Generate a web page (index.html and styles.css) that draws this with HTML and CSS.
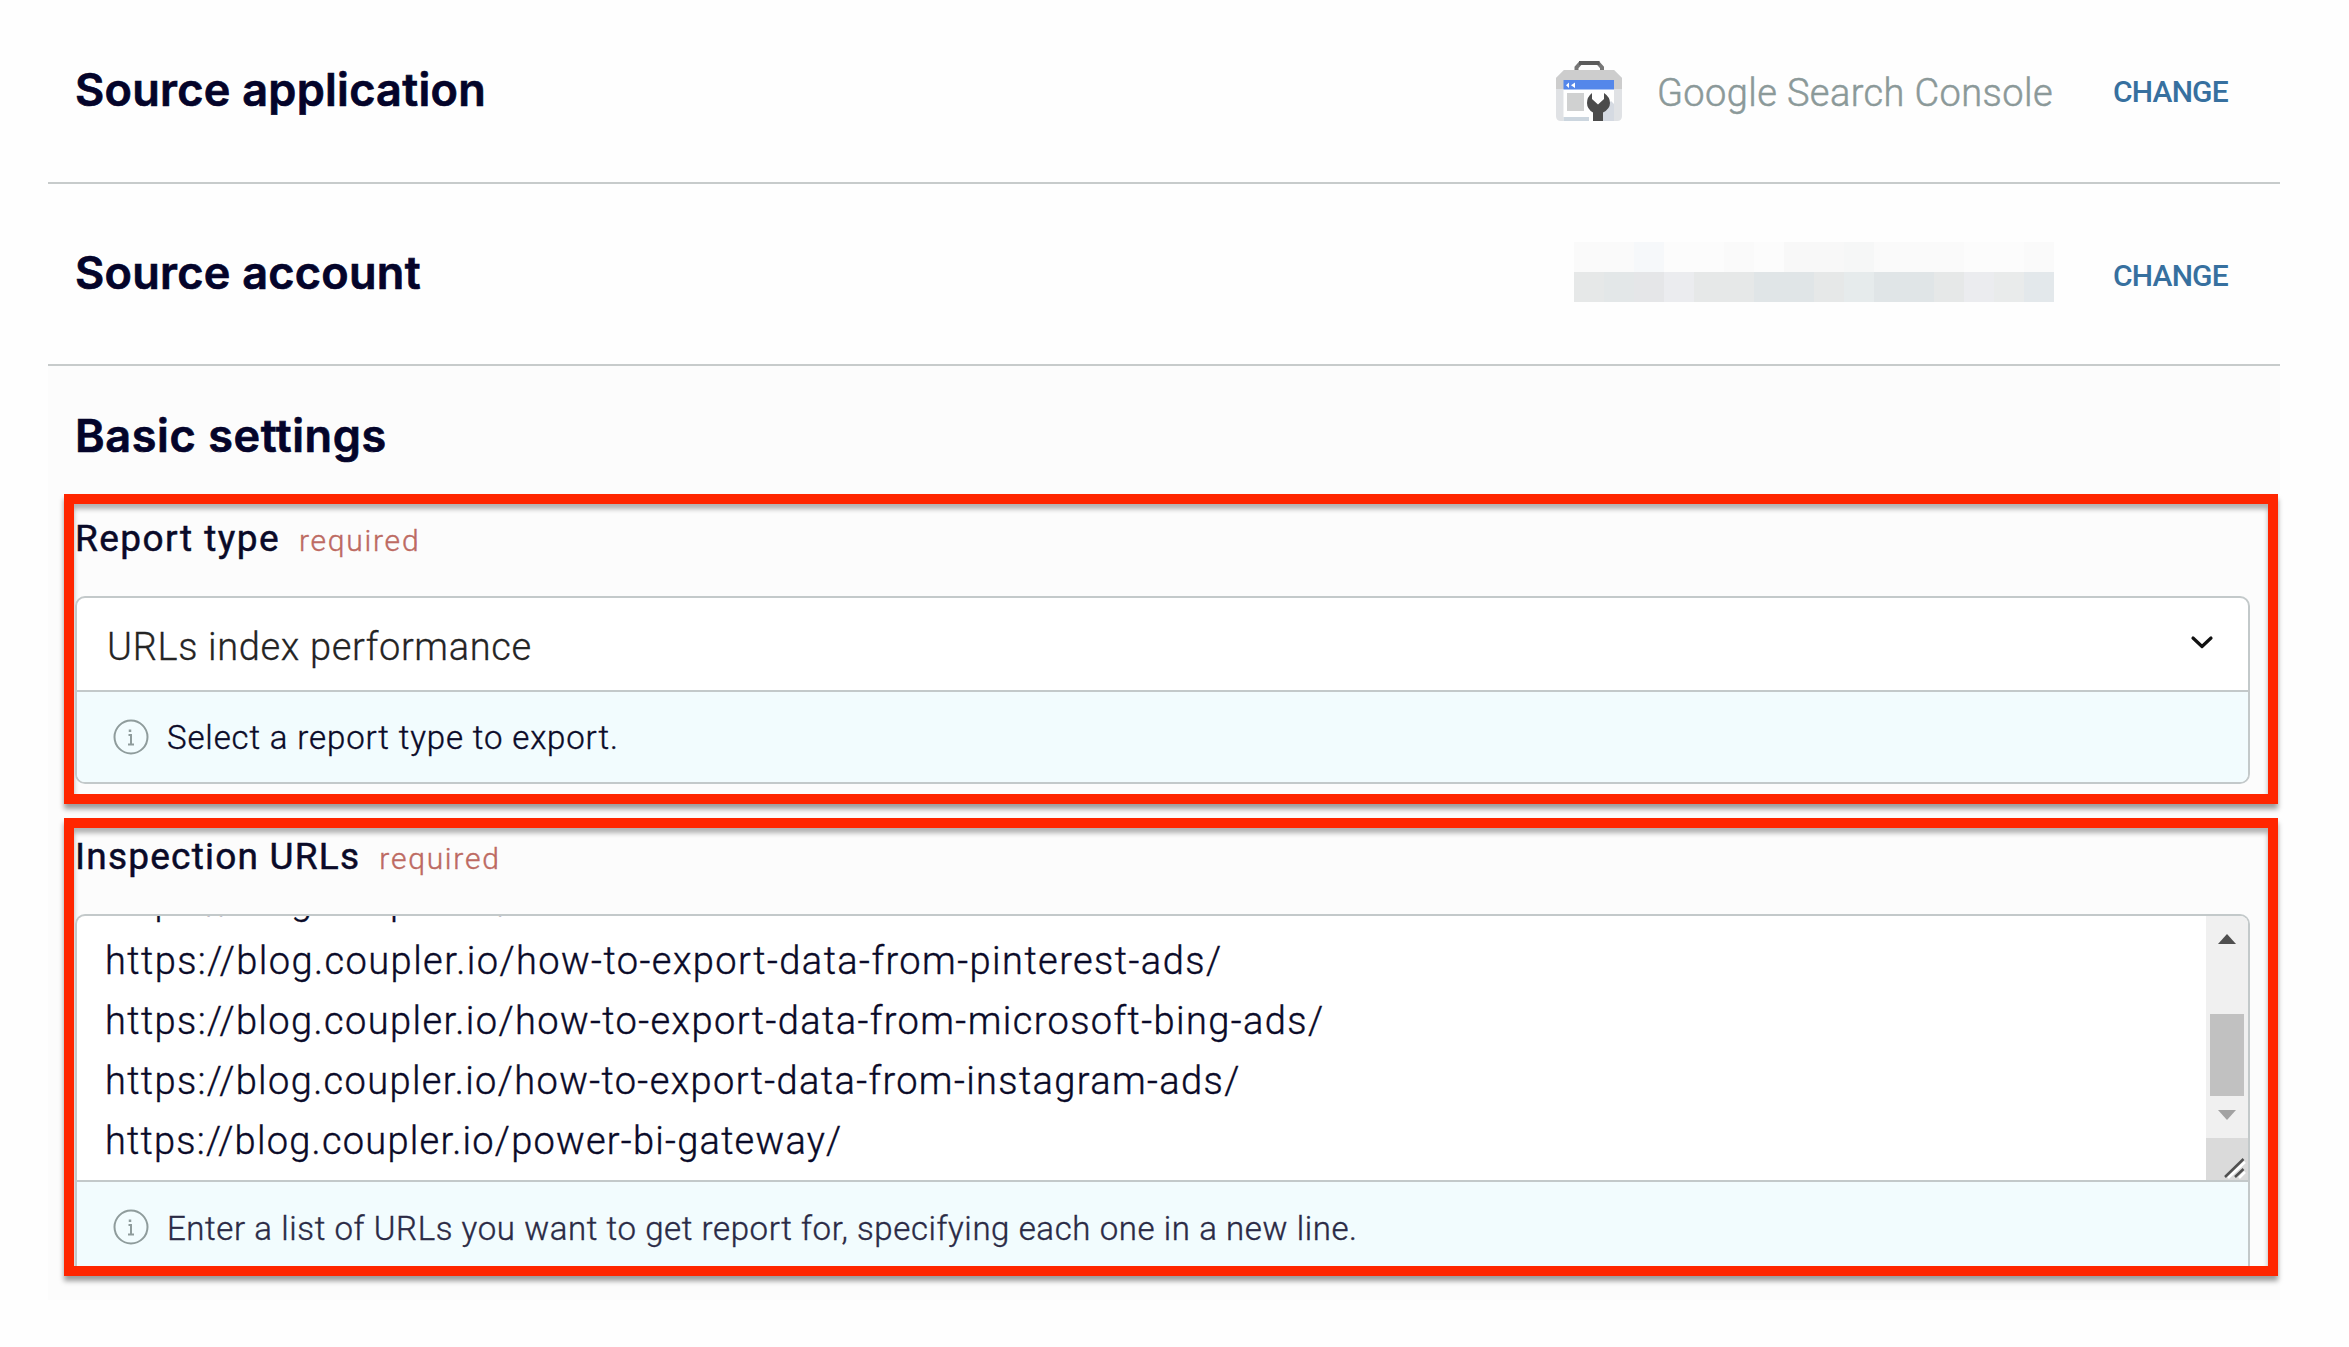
FILE: index.html
```html
<!DOCTYPE html>
<html lang="en">
<head>
<meta charset="utf-8">
<title>Source settings</title>
<link rel="stylesheet" href="styles.css">
</head>
<body>
<main class="page">
  <section class="row">
    <h2 class="heading">Source application</h2>
    <div class="source">
      <svg class="source-icon" width="66" height="60" viewBox="0 0 66 60">
        <path d="M20.500 11V6.500L24.500 2H42L46 6.500V11" fill="none" stroke="#777" stroke-width="4"/>
        <path d="M23 2H43.500" stroke="#5c5c5c" stroke-width="4"/>
        <path d="M8 9H58L66 17V55Q66 60 61 60H5Q0 60 0 55V17Z" fill="#e0e2e5"/>
        <path d="M8 9H58L66 17V28H0V17Z" fill="#cdcdcd"/>
        <path d="M7.500 28H58V60H7.500Z" fill="#fff"/>
        <path d="M7.500 19H58V28.500H7.500Z" fill="#5487ea"/>
        <path d="M10 24.200L13 21.500V27ZM15 24.200L19 21.500V27Z" fill="#fff"/>
        <path d="M11 32H28V50H11Z" fill="#d0d1d1"/>
        <path d="M7.500 56H33V60H7.500Z" fill="#ccd6df"/>
        <path d="M45 60V51L55 40L58 43V60Z" fill="#d5dae2"/>
        <path d="M36 32V38L42 43.500L48 38V32Q54 36 54 42Q54 48 47 51.500V60H37V51.500Q31 48 31 42Q31 36 36 32Z" fill="#4b4b4b"/>
      </svg>
      <span class="source-name">Google Search Console</span>
    </div>
    <a class="change">CHANGE</a>
  </section>

  <section class="row row-account">
    <h2 class="heading">Source account</h2>
    <div class="redacted">
      <i class="r1"></i><i class="r1"></i><i class="r2"></i><i class="r3"></i><i class="r3"></i><i class="r1"></i><i class="r3"></i><i class="r4"></i><i class="r4"></i><i class="r5"></i><i class="r1"></i><i class="r1"></i><i class="r1"></i><i class="r3"></i><i class="r3"></i><i class="r1"></i>
      <i class="d1"></i><i class="d2"></i><i class="d3"></i><i class="d4"></i><i class="d1"></i><i class="d1"></i><i class="d5"></i><i class="d5"></i><i class="d1"></i><i class="d6"></i><i class="d5"></i><i class="d5"></i><i class="d1"></i><i class="d4"></i><i class="d7"></i><i class="d8"></i>
    </div>
    <a class="change">CHANGE</a>
  </section>

  <section class="settings">
    <h2 class="heading heading-basic">Basic settings</h2>

    <div class="frame frame-report">
      <div class="label"><span class="label-report">Report type</span><span class="required">required</span></div>
      <div class="field">
        <div class="select">
          <span>URLs index performance</span>
          <svg width="24" height="16" viewBox="0 0 24 16"><path d="M3 3L12 11.500L21 3" fill="none" stroke="#111" stroke-width="3.200" stroke-linecap="round" stroke-linejoin="round"/></svg>
        </div>
        <div class="help">
          <svg width="36" height="36" viewBox="0 0 36 36" fill="none" stroke="#8f9c9c" stroke-width="2"><circle cx="18" cy="18" r="16.500"/><path d="M15.500 16H18V25M15 25.500H21"/><path d="M17 10.500V13" stroke-width="2.500"/></svg>
          <span class="help-report">Select a report type to export.</span>
        </div>
      </div>
    </div>

    <div class="frame frame-urls">
      <div class="label"><span class="label-urls">Inspection URLs</span><span class="required">required</span></div>
      <div class="field field-open">
        <div class="textarea">
          <div class="lines">
            <span>https://blog.coupler.io/</span>
            <span class="line-pinterest">https://blog.coupler.io/how-to-export-data-from-pinterest-ads/</span>
            <span>https://blog.coupler.io/how-to-export-data-from-microsoft-bing-ads/</span>
            <span class="line-instagram">https://blog.coupler.io/how-to-export-data-from-instagram-ads/</span>
            <span class="line-last">https://blog.coupler.io/power-bi-gateway/</span>
          </div>
          <div class="scroll">
            <svg class="arrow-up" width="18" height="10" viewBox="0 0 18 10"><path d="M0 10L9 0L18 10Z" fill="#4f4f4f"/></svg>
            <div class="thumb"></div>
            <svg class="arrow-down" width="18" height="10" viewBox="0 0 18 10"><path d="M0 0L9 10L18 0Z" fill="#a2a2a2"/></svg>
            <svg class="corner" width="42" height="42" viewBox="0 0 42 42"><path d="M0 0H42V42H0Z" fill="#dadada"/><path d="M22 40L39 24M33 40L39 34" stroke="#fff" stroke-width="2.500"/><path d="M19 39L37.500 21M29 39L37.500 31" stroke="#505050" stroke-width="2.500"/></svg>
          </div>
        </div>
        <div class="help help-cut">
          <svg width="36" height="36" viewBox="0 0 36 36" fill="none" stroke="#8f9c9c" stroke-width="2"><circle cx="18" cy="18" r="16.500"/><path d="M15.500 16H18V25M15 25.500H21"/><path d="M17 10.500V13" stroke-width="2.500"/></svg>
          <span class="help-urls">Enter a list of URLs you want to get report for, specifying each one in a new line.</span>
        </div>
      </div>
    </div>
  </section>
</main>
</body>
</html>
```
FILE: styles.css
```css
* { box-sizing: border-box; }
body { margin: 0; background: #fefefe; font-family: Roboto, "Liberation Sans", sans-serif; font-weight: 300; color: #0a0a28; }
.page { padding: 0 69px 0 48px; }

.row { display: grid; grid-template-columns: 1fr auto 116px; column-gap: 59px; align-items: center; height: 184px; padding: 0 51px 0 27px; border-bottom: 2px solid #c7cbcb; }
.row-account { height: 182px; }
.heading { margin: 0; padding-bottom: 2px; font: 600 45px/60px Inter, "Liberation Sans", sans-serif; letter-spacing: .28px; color: #04042a; -webkit-text-stroke: .7px #04042a; }
.source { display: flex; align-items: center; gap: 34px; padding-right: 1px; }
.source-icon { margin: 0 1px 1px 0; }
.source-name { padding-top: 3px; font-size: 38px; letter-spacing: .41px; color: #8b9999; -webkit-text-stroke: .5px #8b9999; white-space: nowrap; }
.change { padding-top: 1px; font-size: 30px; font-weight: 500; letter-spacing: -.8px; color: #37709f; }
.row-account .change { padding-top: 2px; }

.redacted { display: grid; grid-template-columns: repeat(16, 30px); grid-auto-rows: 30px; margin-bottom: 4px; }
.r1 { background: #fafafa; }
.r2 { background: #f6f8fa; }
.r3 { background: #fcfcfc; }
.r4 { background: #f8f8f8; }
.r5 { background: #f6f7f7; }
.d1 { background: #e6e8e8; }
.d2 { background: #e3e7e8; }
.d3 { background: #e5e6e8; }
.d4 { background: #ebecef; }
.d5 { background: #e0e5e7; }
.d6 { background: #e6ebec; }
.d7 { background: #e9ebeb; }
.d8 { background: #e3e8eb; }

.settings { padding: 40px 2px 24px 16px; background: #fcfcfc; }
.heading-basic { padding: 0 0 0 11px; letter-spacing: .6px; }

.frame { border: 10px solid #ff2600; padding: 0 18px 0 1px; box-shadow: 0 5px 5px rgba(0, 0, 0, .38), inset 0 5px 5px rgba(0, 0, 0, .3); }
.frame-report { height: 310px; margin-top: 28px; padding-top: 10px; }
.frame-urls { height: 458px; margin-top: 14px; padding-top: 4px; }

.label { display: flex; align-items: baseline; gap: 19px; height: 50px; margin-bottom: 32px; font-size: 37px; line-height: 50px; font-weight: 400; -webkit-text-stroke: .5px #0a0a28; }
.label-report { letter-spacing: 1.45px; }
.label-urls { letter-spacing: 1.22px; }
.required { font-size: 30px; font-weight: 300; letter-spacing: 1.75px; color: #bd6a62; -webkit-text-stroke: .4px #bd6a62; }

.field { overflow: hidden; border: 2px solid #c3c9ca; border-radius: 10px; background: #fff; }
.field-open { border-bottom: 0; border-radius: 10px 10px 0 0; }
.select { display: flex; align-items: center; justify-content: space-between; height: 92px; padding: 6px 34px 0 30px; font-size: 38px; letter-spacing: .66px; color: #242424; -webkit-text-stroke: .3px #242424; }
.select svg { margin-bottom: 8px; }
.help { display: flex; align-items: center; gap: 18px; height: 92px; padding-left: 36px; border-top: 2px solid #c3c9ca; background: #f2fcfe; font-size: 33px; -webkit-text-stroke: .4px #0a0a28; }
.help-cut { height: 86px; padding-top: 6px; -webkit-text-stroke-color: #2a2a45; color: #2a2a45; }
.help-report { padding-top: 1px; letter-spacing: .87px; }
.help-urls { padding-top: 2px; letter-spacing: .6px; }

.textarea { display: flex; height: 264px; }
.lines { flex: 1; display: flex; flex-direction: column; justify-content: flex-end; overflow: hidden; padding: 0 0 9px 28px; font-size: 38px; line-height: 60px; letter-spacing: 1.4px; -webkit-text-stroke: .4px #0a0a28; }
.lines span { flex: none; }
.lines .line-pinterest { letter-spacing: 1.44px; }
.lines .line-instagram { letter-spacing: 1.37px; }
.lines .line-last { letter-spacing: 1.24px; }
.scroll { display: flex; flex-direction: column; align-items: center; width: 42px; padding-top: 18px; background: #f0f0f0; }
.thumb { width: 34px; height: 82px; margin: 70px 0 14px; background: #c1c1c1; }
.scroll svg { flex: none; }
.corner { margin-top: 18px; }
```
